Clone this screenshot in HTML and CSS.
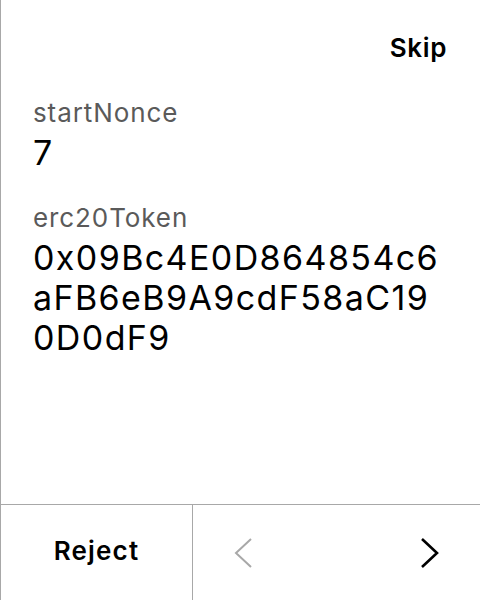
FILE: index.html
```html
<!DOCTYPE html>
<html>
<head>
<meta charset="utf-8">
<link rel="stylesheet" href="styles.css">
</head>
<body>
<div class="screen">
  <header class="top">
    <span class="skip">Skip</span>
  </header>
  <main class="fields">
    <div class="field">
      <div class="label">startNonce</div>
      <div class="value">7</div>
    </div>
    <div class="field">
      <div class="label">erc20Token</div>
      <div class="value">0x09Bc4E0D864854c6aFB6eB9A9cdF58aC190D0dF9</div>
    </div>
  </main>
  <footer class="bar">
    <div class="reject">Reject</div>
    <div class="nav">
      <span class="arrow prev">
        <svg width="20" height="32" viewBox="0 0 20 32"><path d="M18 2 L3 16 L18 30" fill="none" stroke="currentColor" stroke-width="2"/></svg>
      </span>
      <span class="arrow next">
        <svg width="20" height="32" viewBox="0 0 20 32"><path d="M2 2 L17 16 L2 30" fill="none" stroke="currentColor" stroke-width="2.6"/></svg>
      </span>
    </div>
  </footer>
</div>
</body>
</html>
```
FILE: styles.css
```css
html, body {
  margin: 0;
  padding: 0;
  background: #fff;
}
body {
  font-family: Inter, "Noto Sans", sans-serif;
  color: #000;
}
.screen {
  width: 480px;
  height: 600px;
  box-sizing: border-box;
  border-left: 1px solid #a8a8a8;
  display: flex;
  flex-direction: column;
}
.top {
  display: flex;
  justify-content: flex-end;
  padding: 33px 33px 0 0;
  height: 30px;
}
.skip {
  font-size: 26px;
  font-weight: 600;
  line-height: 30px;
  letter-spacing: 0.6px;
}
.fields {
  flex: 1;
  padding: 35px 28px 0 32px;
}
.field + .field {
  margin-top: 30px;
}
.label {
  font-size: 26px;
  line-height: 30px;
  color: #5a5a5a;
  letter-spacing: 0.9px;
}
.value {
  font-size: 34px;
  line-height: 40px;
  margin-top: 5px;
  letter-spacing: 1.4px;
  word-break: break-all;
}
.bar {
  height: 95px;
  border-top: 1px solid #a8a8a8;
  display: flex;
}
.reject {
  width: 191px;
  border-right: 1px solid #a8a8a8;
  display: flex;
  align-items: center;
  justify-content: center;
  font-size: 26px;
  font-weight: 600;
  letter-spacing: 1.2px;
  padding-bottom: 4px;
}
.nav {
  flex: 1;
  display: flex;
  justify-content: space-between;
  align-items: center;
  padding: 0 40px 0 40px;
}
.arrow {
  display: flex;
}
.prev { color: #a8a8a8; }
.next { color: #000; }
```
